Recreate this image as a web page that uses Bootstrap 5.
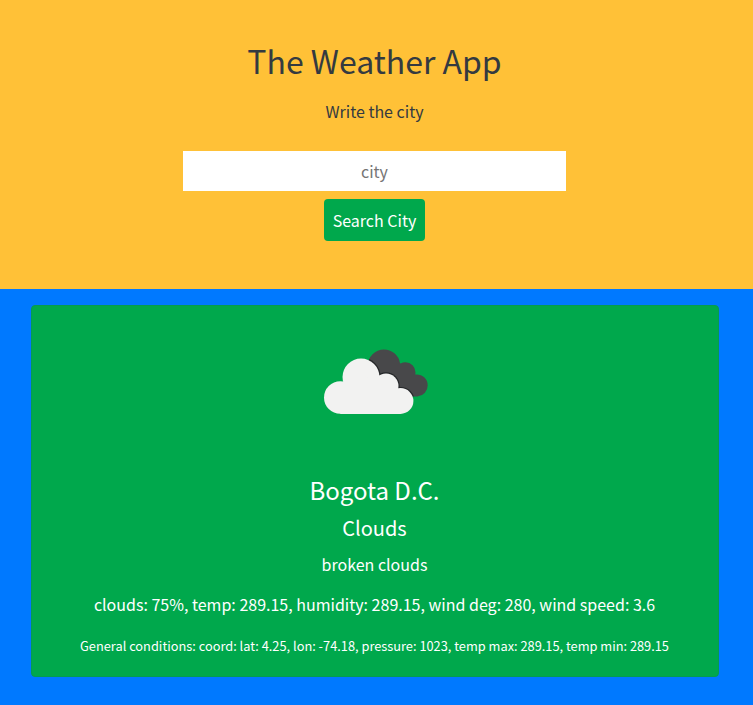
<!DOCTYPE html>
<html lang="en">
<head>
<meta charset="utf-8">
<meta name="viewport" content="width=device-width, initial-scale=1">
<title>The Weather App</title>
<link href="https://cdn.jsdelivr.net/npm/bootstrap@5.3.0/dist/css/bootstrap.min.css" rel="stylesheet">
<style>
body{font-family:"Noto Sans CJK SC","Noto Sans",sans-serif;font-size:16px;line-height:24px;background:#0079ff;width:753px;min-height:705px;overflow:hidden}
.search-panel{background:#ffc137;color:#343a40;height:289px;padding:41px 4px 0 0}
.app-title{font-size:32px;line-height:39px;margin-bottom:19px}
.search-panel p{margin-bottom:28px}
.city-input{width:383px;height:40px;border:0;border-radius:0;padding:1px 2px;font-size:16px;line-height:24px}
.city-input::placeholder{color:#757575}
.btn-search{--bs-btn-bg:#00a84c;--bs-btn-hover-bg:#009543;--bs-btn-color:#fff;--bs-btn-hover-color:#fff;width:101px;height:42px;border:0;border-radius:4px;padding:0;font-size:16px}
.weather-card{margin:16px 33px 0 31px;width:688px;height:372px;background:#00a84c;color:#fff;border:1px solid #069b50;border-radius:4px;padding-right:1px}
.weather-card svg{width:108px;height:68px;margin:42px 0 59px 290px}
.place{font-size:24px;line-height:29px;margin-bottom:12px}
.condition{font-size:20px;line-height:24px;margin-bottom:12px}
.general{font-size:12.8px;line-height:20px}
</style>
</head>
<body>
<header class="search-panel d-flex flex-column align-items-center text-center">
<h1 class="app-title fw-normal">The Weather App</h1>
<p>Write the city</p>
<form class="d-flex flex-column align-items-center gap-2">
<input class="form-control city-input text-center" type="text" placeholder="city" aria-label="city">
<button class="btn btn-search" type="button">Search City</button>
</form>
</header>
<main>
<article class="card weather-card text-center">
<svg viewBox="322 348 108 68" aria-hidden="true">
<defs><clipPath id="back-cloud"><circle cx="384" cy="365.700" r="16.200"/><circle cx="405.500" cy="372.200" r="10"/><circle cx="416.700" cy="385.400" r="11"/><path d="M384 372L400 363L412 374L418 396.400H405L384 385Z"/></clipPath></defs>
<g clip-path="url(#back-cloud)">
<rect x="366" y="348" width="64" height="50" fill="#48484a"/>
<g fill="#252729"><circle cx="361" cy="377" r="19.700"/><circle cx="386" cy="386" r="13.700"/><circle cx="400.500" cy="401" r="14.100"/></g>
</g>
<g fill="#f2f2f1"><circle cx="361" cy="377" r="18.500"/><circle cx="340.300" cy="397.500" r="16.300"/><circle cx="386" cy="386" r="12.500"/><circle cx="400.500" cy="401" r="12.900"/><path d="M340.300 390L361 375L386 386L400.500 394V413.900H340.300Z"/></g>
</svg>
<h2 class="place fw-normal">Bogota D.C.</h2>
<h3 class="condition fw-normal">Clouds</h3>
<p class="mb-3">broken clouds</p>
<p class="mb-3 pb-1">clouds: 75%, temp: 289.15, humidity: 289.15, wind deg: 280, wind speed: 3.6</p>
<p class="general mb-0">General conditions: coord: lat: 4.25, lon: -74.18, pressure: 1023, temp max: 289.15, temp min: 289.15</p>
</article>
</main>
<script src="https://cdn.jsdelivr.net/npm/bootstrap@5.3.0/dist/js/bootstrap.bundle.min.js"></script>
</body>
</html>
